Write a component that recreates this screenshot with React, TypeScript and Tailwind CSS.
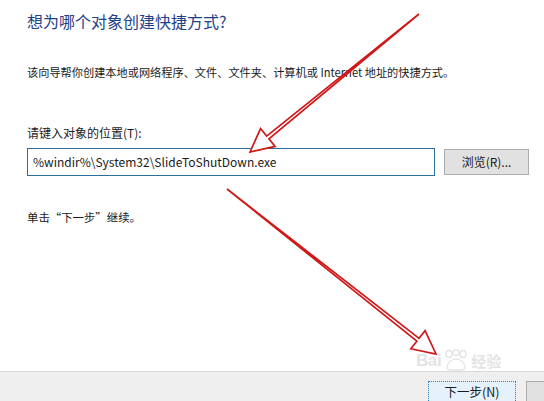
import React from "react";

type Pt = [number, number];

// hollow tapered arrow, the kind drawn on top of screenshots
function arrowPoints(s: Pt, t: Pt, head = 23, half = 11.5, shaft = 1.8) {
  const dx = t[0] - s[0];
  const dy = t[1] - s[1];
  const len = Math.hypot(dx, dy);
  const d = [dx / len, dy / len];
  const n = [-d[1], d[0]];
  const b = [t[0] - d[0] * head, t[1] - d[1] * head];
  const p = (k: number): string => `${b[0] + n[0] * k},${b[1] + n[1] * k}`;
  return [`${s[0]},${s[1]}`, p(shaft), p(half), `${t[0]},${t[1]}`, p(-half), p(-shaft)].join(" ");
}

export default function App() {
  const font = { fontFamily: '"Noto Sans CJK SC", "Noto Sans", sans-serif' };

  return (
    <div className="relative h-[401px] w-[544px] overflow-hidden bg-white flex flex-col text-[#1a1a1a]" style={font}>
      <div className="pl-[27px] pt-[10px] flex flex-col">
        <h1 className="text-[16px] leading-[22px] text-[#1f4186]">想为哪个对象创建快捷方式?</h1>

        <p className="mt-[32px] text-[11.2px] leading-[16px]">
          该向导帮你创建本地或网络程序、文件、文件夹、计算机或 Internet 地址的快捷方式。
        </p>

        <label className="mt-[45px] text-[12px] leading-[16px]">请键入对象的位置(T):</label>

        <div className="mt-[7px] flex items-center">
          <div className="w-[408px] h-[28px] shrink-0 border border-[#2d6f9c] flex items-center pl-[5px] text-[12px]">
            %windir%\System32\SlideToShutDown.exe
          </div>
          <button className="ml-[9px] w-[85px] h-[26px] shrink-0 border border-[#adadad] bg-[#e1e1e1] text-[12px] flex items-center justify-center">
            浏览(R)...
          </button>
        </div>

        <p className="mt-[33px] text-[11.4px] leading-[16px]">单击“下一步”继续。</p>
      </div>

      <div className="flex-1" />

      <div className="h-[30px] shrink-0 border-t border-[#d9d9d9] bg-[#efefef] flex items-start pt-[9px] pl-[428px] gap-[10px]">
        <button className="w-[88px] h-[22px] shrink-0 border border-dotted border-[#2f7fbf] bg-[#e5f1fb] text-[12.5px] leading-none whitespace-nowrap flex items-center justify-center">
          下一步(N)
        </button>
        <button className="w-[88px] h-[22px] shrink-0 border border-[#adadad] bg-[#e1e1e1]" />
      </div>

      {/* Baidu jingyan watermark */}
      <div className="absolute left-[416px] top-[349px] flex items-center gap-[2px] text-[#e4e4e4] select-none">
        <span className="text-[17px] font-bold leading-none tracking-tight" style={{ fontFamily: '"Liberation Sans", sans-serif' }}>Bai</span>
        <svg width="26" height="22" viewBox="0 0 26 22" fill="none" stroke="#e4e4e4" strokeWidth="1.4">
          <ellipse cx="6" cy="5" rx="3" ry="3.5" />
          <ellipse cx="13" cy="3.5" rx="3" ry="3" />
          <ellipse cx="20" cy="5" rx="3" ry="3.5" />
          <path d="M4 19c0-5 4-9 9-9s9 4 9 9c0 2-3 2-9 2s-9 0-9-2z" />
        </svg>
        <span className="text-[15px] font-bold leading-none">经验</span>
      </div>

      {/* red arrows drawn over the screenshot */}
      <svg className="absolute inset-0 pointer-events-none" width="544" height="401" viewBox="0 0 544 401">
        <polygon points={arrowPoints([419, 14], [250, 152])} fill="white" stroke="#d01818" strokeWidth="1.7" strokeLinejoin="miter" />
        <polygon points={arrowPoints([227, 189], [436, 354])} fill="white" stroke="#d01818" strokeWidth="1.7" strokeLinejoin="miter" />
      </svg>
    </div>
  );
}
